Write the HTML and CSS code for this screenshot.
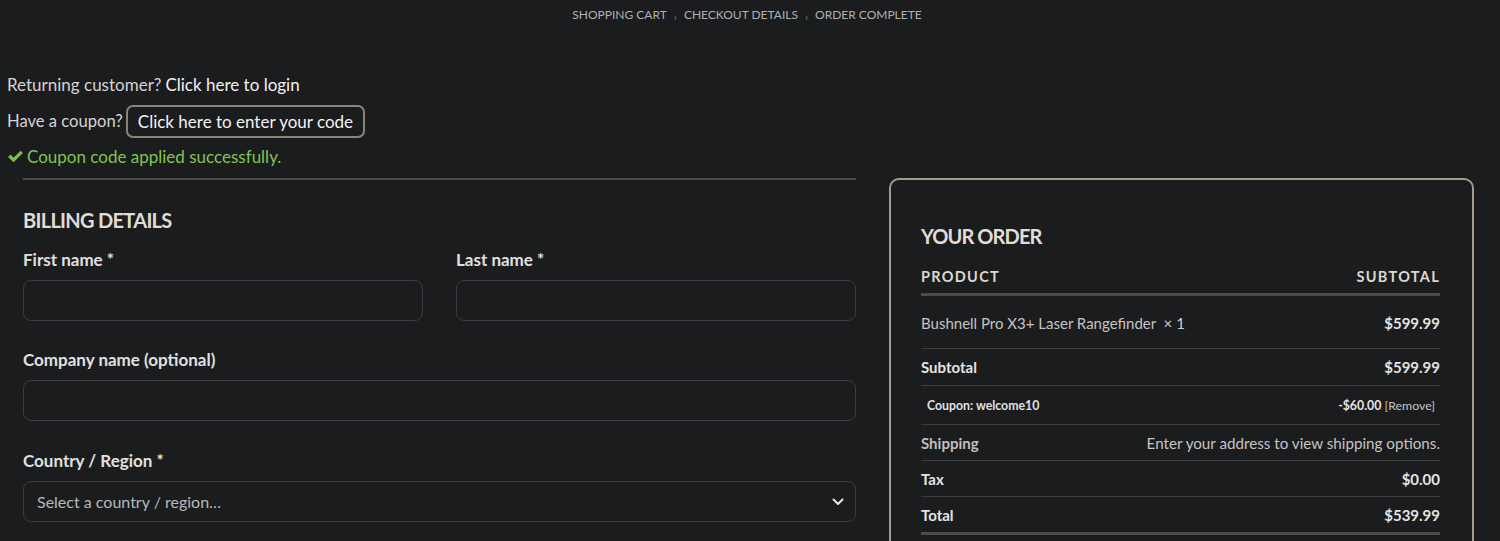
FILE: index.html
```html
<!DOCTYPE html>
<html>
<head>
<meta charset="utf-8">
<link rel="stylesheet" href="styles.css">
</head>
<body>
<nav class="breadcrumb">
  <span>SHOPPING CART</span><span class="sep">›</span><span>CHECKOUT DETAILS</span><span class="sep">›</span><span>ORDER COMPLETE</span>
</nav>
<section class="notices">
  <div class="notice">Returning customer? <a class="link">Click here to login</a></div>
  <div class="notice coupon-notice">Have a coupon? <a class="btn-code">Click here to enter your code</a></div>
  <div class="notice success">
    <svg class="check" viewBox="0 0 16 14" width="17" height="15"><path d="M1 7.5 L3.3 5.2 L6.2 8.1 L12.8 1.5 L15 3.7 L6.2 12.5 Z" fill="#7dc142"/></svg>
    Coupon code applied successfully.
  </div>
</section>
<main class="checkout">
  <div class="billing">
    <div class="divider"></div>
    <h3 class="heading">BILLING DETAILS</h3>
    <div class="row-two">
      <div class="field">
        <label>First name <span class="req">*</span></label>
        <div class="input"></div>
      </div>
      <div class="field">
        <label>Last name <span class="req">*</span></label>
        <div class="input"></div>
      </div>
    </div>
    <div class="field wide">
      <label>Company name (optional)</label>
      <div class="input"></div>
    </div>
    <div class="field wide">
      <label>Country / Region <span class="req">*</span></label>
      <div class="input select">
        <span class="placeholder">Select a country / region…</span>
        <svg class="chev" viewBox="0 0 12 8" width="12" height="8"><path d="M1.5 1.5 L6 6 L10.5 1.5" fill="none" stroke="#e6e6e6" stroke-width="2" stroke-linecap="round" stroke-linejoin="round"/></svg>
      </div>
    </div>
  </div>
  <aside class="order">
    <h3 class="heading order-title">YOUR ORDER</h3>
    <div class="orow head"><span>PRODUCT</span><span>SUBTOTAL</span></div>
    <div class="orow item"><span class="pname">Bushnell Pro X3+ Laser Rangefinder&nbsp; <b class="qty">× 1</b></span><b>$599.99</b></div>
    <div class="orow sub"><b>Subtotal</b><b>$599.99</b></div>
    <div class="orow coupon"><b class="clabel">Coupon: welcome10</b><span><b class="neg">-$60.00</b> <span class="remove">[Remove]</span></span></div>
    <div class="orow ship"><b class="muted">Shipping</b><span class="shipinfo">Enter your address to view shipping options.</span></div>
    <div class="orow tax"><b>Tax</b><b>$0.00</b></div>
    <div class="orow total"><b>Total</b><b>$539.99</b></div>
  </aside>
</main>
</body>
</html>
```

FILE: styles.css
```css
html, body {
  margin: 0;
  padding: 0;
  background: #1b1c1e;
  color: #d0d0d0;
  font-family: Lato, "Noto Sans", sans-serif;
  height: 541px;
  overflow: hidden;
}

.breadcrumb {
  text-align: center;
  font-size: 12px;
  line-height: 16px;
  padding-top: 7px;
  color: #b0b0b0;
  padding-right: 6px;
}
.breadcrumb .sep {
  display: inline-block;
  margin: 0 7px;
  font-size: 11px;
  color: #777;
  transform: translateY(2px);
}

.notices {
  padding-left: 7px;
  margin-top: 44px;
}
.notice {
  font-size: 17px;
  line-height: 36px;
  height: 36px;
  color: #d4d4d4;
  display: flex;
  align-items: center;
  gap: 4px;
}
.coupon-notice {
  font-size: 16.6px;
  gap: 3px;
}
.link {
  color: #f2f2f2;
}
.btn-code {
  color: #f2f2f2;
  border: 2px solid #8b8476;
  border-radius: 7px;
  padding: 4px 10px;
  line-height: 21px;
  font-size: 17px;
}
.success {
  color: #82c450;
  gap: 3px;
}
.check {
  margin-top: -2px;
}

.checkout {
  display: flex;
  gap: 33px;
  padding-left: 23px;
  margin-top: 3px;
}
.billing {
  width: 833px;
}
.divider {
  height: 2px;
  background: #4a4a4a;
}
.heading {
  margin: 0;
  font-size: 20px;
  line-height: 24px;
  font-weight: 700;
  letter-spacing: -0.7px;
  color: #e2ddd4;
}
.billing .heading {
  margin-top: 28px;
}
.row-two {
  display: grid;
  grid-template-columns: 400px 400px;
  gap: 33px;
  margin-top: 18px;
}
.field label {
  display: block;
  font-size: 17px;
  line-height: 20px;
  font-weight: 700;
  color: #e0e0e0;
  margin-bottom: 10px;
}
.input {
  height: 39px;
  border: 1px solid #3b3c3f;
  border-radius: 8px;
  background: #1b1c1e;
  box-sizing: content-box;
}
.field.wide {
  margin-top: 29px;
}
.field.wide + .field.wide {
  margin-top: 30px;
}
.select {
  display: flex;
  align-items: center;
  justify-content: space-between;
  padding: 0 11px 0 13px;
}
.placeholder {
  font-size: 16px;
  color: #b8b8b8;
}

.order {
  width: 519px;
  border: 2px solid #a49b8a;
  border-radius: 10px;
  padding: 44px 32px 40px 30px;
  height: 400px;
}
.order-title {
  margin-bottom: 21px;
  letter-spacing: -0.9px;
}
.orow {
  display: flex;
  justify-content: space-between;
  align-items: center;
  border-bottom: 1px solid #3c3c3e;
  font-size: 15px;
  color: #d6d6d6;
}
.orow b {
  font-weight: 700;
  color: #e4e4e4;
}
.orow.head {
  font-weight: 700;
  letter-spacing: 1.3px;
  color: #ddd8d0;
  height: 24px;
  align-items: flex-start;
  border-bottom: 3px solid #4c4c4e;
  font-size: 14.5px;
  line-height: 16px;
}
.orow.item {
  height: 51px;
  padding-top: 1px;
}
.pname {
  color: #c4c4c4;
}
.pname .qty {
  font-weight: 400;
  color: #d0d0d0;
}
.orow.sub { height: 36px; }
.orow.coupon {
  height: 38px;
  font-size: 12.3px;
  padding: 0 5px 0 6px;
}
.orow.coupon .clabel { color: #e0e0e0; }
.remove { color: #c4c4c4; }
.orow.ship { height: 35px; }
.muted { color: #c0c0c0 !important; }
.shipinfo { color: #c4c4c4; font-size: 15.2px; }
.orow.tax { height: 35px; }
.orow.total {
  height: 35px;
  border-bottom: 3px solid #4c4c4e;
}
```
